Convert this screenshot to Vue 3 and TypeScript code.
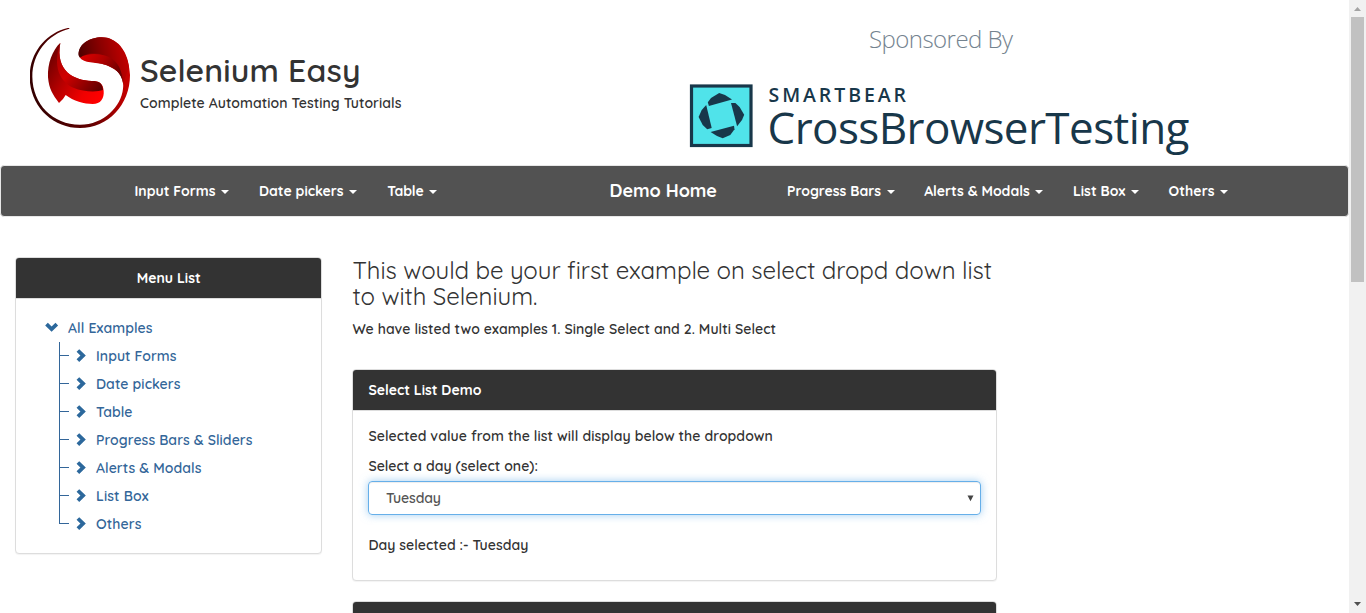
<script setup lang="ts">
import { ref } from 'vue'

interface Label {
  text: string
  width: number
}

const leftNav: Label[] = [
  { text: 'Input Forms', width: 81 },
  { text: 'Date pickers', width: 84.5 },
  { text: 'Table', width: 36.5 },
]
const rightNav: Label[] = [
  { text: 'Progress Bars', width: 94 },
  { text: 'Alerts & Modals', width: 105.5 },
  { text: 'List Box', width: 52.5 },
  { text: 'Others', width: 46 },
]
const tree: Label[] = [
  { text: 'Input Forms', width: 80.5 },
  { text: 'Date pickers', width: 84.5 },
  { text: 'Table', width: 36.5 },
  { text: 'Progress Bars & Sliders', width: 156.5 },
  { text: 'Alerts & Modals', width: 105.5 },
  { text: 'List Box', width: 52.5 },
  { text: 'Others', width: 45.5 },
]
const selectedDay = ref('Tuesday')

// Tracks a label out (or in) so that its glyphs span the given width.
const vTrack = {
  mounted(el: HTMLElement, binding: { value: number }) {
    const natural = el.getBoundingClientRect().width
    const count = (el.textContent ?? '').length
    const spacing = (binding.value - natural) / (count - 1)
    el.style.letterSpacing = `${spacing}px`
    el.style.marginRight = `${-spacing}px`
  },
}
</script>

<template>
  <div class="window">
    <div class="page">
      <header class="header">
        <div class="brand">
          <svg class="brand-logo" viewBox="30 24 300 300">
            <defs>
              <linearGradient id="ring" x1="0" y1="0.4" x2="1" y2="0.2">
                <stop offset="0" stop-color="#350000" />
                <stop offset="0.5" stop-color="#650000" />
                <stop offset="0.8" stop-color="#b50000" />
                <stop offset="1" stop-color="#d00000" />
              </linearGradient>
              <linearGradient id="cap" x1="0" y1="0.5" x2="1" y2="0.3">
                <stop offset="0" stop-color="#4a0000" />
                <stop offset="0.5" stop-color="#8d0000" />
                <stop offset="1" stop-color="#c80000" />
              </linearGradient>
              <linearGradient id="fold" x1="0" y1="0" x2="1" y2="0.5">
                <stop offset="0" stop-color="#e00000" />
                <stop offset="0.5" stop-color="#b00000" />
                <stop offset="1" stop-color="#6a0000" />
              </linearGradient>
              <linearGradient id="tail" x1="0" y1="0.2" x2="1" y2="0.8">
                <stop offset="0" stop-color="#6a0000" />
                <stop offset="0.4" stop-color="#b80000" />
                <stop offset="0.75" stop-color="#f00000" />
                <stop offset="1" stop-color="#ff0000" />
              </linearGradient>
              <linearGradient id="under" x1="0" y1="0" x2="1" y2="0.9">
                <stop offset="0" stop-color="#a00000" />
                <stop offset="0.45" stop-color="#d00000" />
                <stop offset="1" stop-color="#600000" />
              </linearGradient>
            </defs>
            <path
              fill="url(#ring)"
              d="M148 23C80 36 29 97 29 170C29 256 96 324 180 324C264 324 330 255 330 165C328 110 298 52 245 52C210 52 174 72 176 106C184 126 232 124 265 138C298 152 313 174 309 206C304 258 252 314 180 314C98 314 38 252 37 170C37 101 82 43 148 26Z"
            />
            <path
              fill="url(#cap)"
              d="M176 106C174 72 210 52 245 52C292 52 321 93 327 140C318 170 312 180 309 190C305 140 262 98 215 100C196 101 183 112 180 114Z"
            />
            <path
              fill="url(#fold)"
              d="M180 113C198 100 236 98 265 110C295 124 306 150 309 188C303 157 283 143 256 134C226 125 191 130 180 113Z"
            />
            <path
              fill="url(#tail)"
              d="M121 68C97 91 82 130 84 172C87 207 98 223 117 249Q131 237 137 225C160 243 193 252 218 252C242 252 253 235 251 212C249 190 238 183 215 183C163 180 105 155 121 68Z"
            />
            <path
              fill="url(#under)"
              d="M121 68C105 155 163 180 215 183C238 183 248 190 249 210C230 217 190 216 160 203C119 184 97 138 121 68Z"
            />
          </svg>
          <div class="brand-text">
            <div class="brand-name"><span v-track="220.5">Selenium Easy</span></div>
            <div class="brand-tag"><span v-track="261.5">Complete Automation Testing Tutorials</span></div>
          </div>
        </div>
        <svg class="sponsor" width="520" height="150" viewBox="680 15 520 150">
          <text x="869" y="48" class="sponsor-by" textLength="144">Sponsored By</text>
          <rect x="691.5" y="86" width="59.5" height="59.5" fill="#50e3ea" stroke="#18374a" stroke-width="3.2" />
          <g fill="#18374a">
            <path d="M707.8 102.3L711 98L719.2 93L725 95L732 99.4L708.9 106Z" />
            <path d="M731 103L735.4 103L739.6 107L744.2 114.7L742 120L737.1 126.2Z" />
            <path d="M734 125.7L734.5 129.3L730.3 135L722.7 138.2L717 136L710.6 132Z" />
            <path d="M706.2 105L711.7 128L707.2 129.3L702.7 125L698.6 117L701.7 110Z" />
          </g>
          <text x="768.5" y="101.8" class="sponsor-maker" textLength="137.5">SMARTBEAR</text>
          <text x="767.5" y="144" class="sponsor-name" textLength="422">CrossBrowserTesting</text>
        </svg>
      </header>

      <nav class="navbar">
        <ul class="nav nav-left">
          <li v-for="item in leftNav" :key="item.text">
            <span v-track="item.width">{{ item.text }}</span><i class="caret"></i>
          </li>
        </ul>
        <a class="home"><span v-track="107.5">Demo Home</span></a>
        <ul class="nav nav-right">
          <li v-for="item in rightNav" :key="item.text">
            <span v-track="item.width">{{ item.text }}</span><i class="caret"></i>
          </li>
        </ul>
      </nav>

      <div class="content">
        <aside class="panel sidebar">
          <div class="panel-heading centered"><span v-track="64">Menu List</span></div>
          <div class="tree">
            <div class="tree-root">
              <svg width="14" height="12" viewBox="0 0 14 12">
                <path d="M1.5 2.2L6.6 7.1L11.8 2.2" />
              </svg>
              <span v-track="84.5">All Examples</span>
            </div>
            <ul class="branches">
              <li v-for="item in tree" :key="item.text">
                <svg width="10" height="14" viewBox="0 0 10 14">
                  <path d="M1.9 1.5L7.1 6.6L1.9 11.7" />
                </svg>
                <span v-track="item.width">{{ item.text }}</span>
              </li>
            </ul>
          </div>
        </aside>

        <main class="main">
          <h2>
            <span v-track="639.5">This would be your first example on select dropd down list</span>
            <span v-track="185">to with Selenium.</span>
          </h2>
          <p class="intro"><span v-track="423.5">We have listed two examples 1. Single Select and 2. Multi Select</span></p>

          <section class="panel demo">
            <div class="panel-heading"><span v-track="113">Select List Demo</span></div>
            <div class="panel-body">
              <p class="line"><span v-track="404.5">Selected value from the list will display below the dropdown</span></p>
              <p class="line"><span v-track="169.5">Select a day (select one):</span></p>
              <div class="select">
                <span v-track="55">{{ selectedDay }}</span>
                <svg width="7" height="7" viewBox="0 0 7 7"><path d="M0.5 0.5H6.5L3.5 6.2Z" /></svg>
              </div>
              <p class="result"><span v-track="160">Day selected :- {{ selectedDay }}</span></p>
            </div>
          </section>
          <section class="panel next"><div class="panel-heading"></div></section>
        </main>
      </div>
    </div>

    <div class="scrollbar">
      <svg width="17" height="17" viewBox="0 0 17 17"><path fill="#a3a3a3" d="M5 11H12L8.5 7Z" /></svg>
      <div class="thumb"></div>
      <svg class="down" width="17" height="17" viewBox="0 0 17 17"><path fill="#505050" d="M5 6H12L8.5 10Z" /></svg>
    </div>
  </div>
</template>

<style>
body {
  margin: 0;
  overflow: hidden;
  background: #fff;
}
</style>

<style scoped>
* {
  box-sizing: border-box;
}
.window {
  display: flex;
  height: 613px;
  overflow: hidden;
  font-family: Quicksand, Lato, "Open Sans", sans-serif;
  font-size: 14px;
  font-weight: 600;
  line-height: 20px;
  color: #333;
}
.window span {
  display: inline-block;
  white-space: pre;
}
ul {
  list-style: none;
  margin: 0;
  padding: 0;
}
.page {
  width: 1349px;
  height: 613px;
  overflow: hidden;
}
.header {
  display: flex;
  justify-content: space-between;
  height: 165px;
  padding: 15px 149px 0 30px;
}
.brand {
  display: flex;
  gap: 10px;
  padding-top: 13px;
}
.brand-logo {
  width: 100px;
  height: 100px;
}
.brand-name {
  margin-top: 23px;
  font-size: 32px;
  font-weight: 600;
  line-height: 38px;
}
.brand-tag {
  margin-top: 4px;
}
.sponsor {
  font-family: "Open Sans", sans-serif;
}
.sponsor-by {
  font-size: 24px;
  font-weight: 300;
  fill: #74838f;
}
.sponsor-maker {
  font-family: "Open Sans", sans-serif;
  font-size: 19.5px;
  font-weight: 600;
  fill: #18374a;
}
.sponsor-name {
  font-size: 44px;
  font-weight: 400;
  fill: #18374a;
}
.navbar {
  display: flex;
  align-items: center;
  height: 52px;
  background: #525252;
  border: 1px solid #e7e7e7;
  border-radius: 4px;
  color: #fff;
  font-weight: 700;
}
.nav {
  display: flex;
  gap: 30px;
}
.nav li {
  display: flex;
  align-items: center;
}
.nav-left {
  width: 608.5px;
  padding-left: 133.5px;
}
.nav-right {
  gap: 29.6px;
}
.home {
  width: 177.5px;
  font-size: 18px;
}
.caret {
  width: 0;
  margin: 2px 0 0 5.6px;
  border: 4px solid transparent;
  border-top-color: #fff;
  border-bottom: 0;
}
.content {
  display: flex;
  gap: 30px;
  padding: 40px 15px 0;
}
.panel {
  border: 1px solid #ddd;
  border-radius: 4px;
  overflow: hidden;
  background: #fff;
  box-shadow: 0 1px 1px rgba(0, 0, 0, 0.05);
}
.panel-heading {
  height: 41px;
  padding: 10px 15px 10px 15.4px;
  border-bottom: 1px solid #ddd;
  background: #333;
  color: #fff;
  font-weight: 700;
}
.centered {
  text-align: center;
}
.sidebar {
  width: 307px;
  height: 297px;
}
.tree {
  padding: 15px 29px;
  color: #369;
}
.tree path {
  fill: none;
  stroke: #2c689c;
  stroke-width: 3.8;
}
.tree-root {
  display: flex;
  align-items: center;
  height: 28px;
  gap: 9px;
}
.branches {
  position: relative;
  margin-left: 14px;
}
.branches::before {
  content: "";
  position: absolute;
  left: 0;
  top: 0;
  width: 1px;
  height: 182px;
  background: #369;
}
.branches li {
  display: flex;
  align-items: center;
  height: 28px;
}
.branches li::before {
  content: "";
  width: 10px;
  height: 1px;
  margin: 0 7px 2px 0;
  background: #369;
}
.branches svg {
  margin-right: 10px;
}
.main {
  width: 645px;
}
h2 {
  display: flex;
  flex-direction: column;
  align-items: flex-start;
  margin: 0;
  padding-left: 0.4px;
  font-size: 24px;
  font-weight: 400;
  line-height: 26px;
}
.intro {
  margin: 10px 0 0;
  padding-left: 0.4px;
}
.demo {
  height: 212px;
  margin-top: 30px;
}
.panel-body {
  padding: 15px 15px 15px 15.4px;
}
.line {
  margin: 0 0 10px;
}
.select {
  display: flex;
  align-items: center;
  justify-content: space-between;
  height: 34px;
  margin: -5px 0 0 -0.4px;
  padding: 0 6px 0 17px;
  border: 1px solid #66afe9;
  border-radius: 4px;
  box-shadow: inset 0 1px 1px rgba(0, 0, 0, 0.075), 0 0 8px rgba(102, 175, 233, 0.6);
  color: #555;
}
.select path {
  fill: #444;
}
.result {
  margin: 20px 0 0;
}
.next {
  margin-top: 20px;
}
.scrollbar {
  display: flex;
  flex-direction: column;
  width: 17px;
  background: #f1f1f1;
}
.thumb {
  width: 13px;
  height: 265px;
  margin-left: 2px;
  background: #c1c1c1;
}
.down {
  margin-top: auto;
}
</style>
